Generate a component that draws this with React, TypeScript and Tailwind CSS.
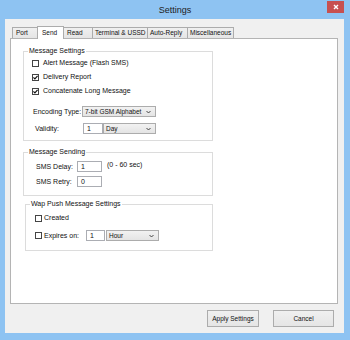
import React from "react";

function Check({ checked }: { checked?: boolean }) {
  return (
    <span className="w-[7px] h-[7px] border border-[#444] bg-white flex items-center justify-center shrink-0">
      {checked && (
        <svg width="5" height="5" viewBox="0 0 5 5">
          <path d="M0.4 2.4 L1.9 3.9 L4.6 0.8" stroke="#111" strokeWidth="1.2" fill="none" />
        </svg>
      )}
    </span>
  );
}

function Chevron() {
  return (
    <svg width="5" height="4" viewBox="0 0 5 4" className="shrink-0">
      <path d="M0.5 1 L2.5 3 L4.5 1" stroke="#333" strokeWidth="0.9" fill="none" />
    </svg>
  );
}

function Select({ cls, text }: { cls: string; text: string }) {
  return (
    <div className={"h-[11px] border border-[#acacac] bg-gradient-to-b from-[#f2f2f2] to-[#e4e4e4] flex items-center justify-between pl-[2px] pr-[4px] whitespace-nowrap overflow-hidden text-[6.5px] " + cls}>
      <span>{text}</span>
      <Chevron />
    </div>
  );
}

function Input({ cls, text }: { cls: string; text: string }) {
  return (
    <div className={"h-[11px] border border-[#abadb3] bg-white flex items-center pl-[3px] " + cls}>
      {text}
    </div>
  );
}

export default function App() {
  return (
    <div className="w-[350px] h-[340px] bg-[#8ec3f2] flex flex-col font-['Liberation_Sans',Arial,sans-serif] text-[7px] leading-[8px] text-[#111] whitespace-nowrap">
      <div className="h-[19px] relative flex items-center justify-center shrink-0">
        <span className="text-[9px] leading-[10px] text-[#222]">Settings</span>
        <div className="absolute right-[6px] top-[1px] w-[17px] h-[12px] bg-[#c75050] flex items-center justify-center">
          <svg width="6" height="6" viewBox="0 0 6 6">
            <path d="M1 1 L5 5 M5 1 L1 5" stroke="#fff" strokeWidth="1.4" />
          </svg>
        </div>
      </div>
      <div className="ml-[5px] mr-[6px] mb-[7px] flex-1 bg-[#f0f0f0] flex flex-col">
        <div className="ml-[7px] mt-[7px] h-[12px] flex items-end shrink-0 text-[6.5px]">
          <div className="w-[25px] h-[11px] border-l border-t border-[#acacac] bg-gradient-to-b from-[#f0f0f0] to-[#e5e5e5] pl-[3px] flex items-center">Port</div>
          <div className="w-[27px] h-[13px] -mb-[1px] relative z-10 border-l border-r border-t border-[#acacac] bg-white pl-[4px] flex items-start pt-[2px]">Send</div>
          <div className="w-[28px] h-[11px] border-t border-[#acacac] bg-gradient-to-b from-[#f0f0f0] to-[#e5e5e5] pl-[3px] flex items-center">Read</div>
          <div className="w-[55px] h-[11px] border-l border-t border-[#acacac] bg-gradient-to-b from-[#f0f0f0] to-[#e5e5e5] pl-[2px] flex items-center overflow-hidden">Terminal &amp; USSD</div>
          <div className="w-[40px] h-[11px] border-l border-t border-[#acacac] bg-gradient-to-b from-[#f0f0f0] to-[#e5e5e5] pl-[2px] flex items-center">Auto-Reply</div>
          <div className="w-[47px] h-[11px] border-l border-t border-r border-[#acacac] bg-gradient-to-b from-[#f0f0f0] to-[#e5e5e5] pl-[2px] flex items-center">Miscellaneous</div>
        </div>
        <div className="ml-[5px] w-[328px] h-[266px] border border-[#b4b4b4] bg-white flex flex-col shrink-0">
          <fieldset className="ml-[12px] mt-[8px] w-[190px] border border-[#dcdcdc] pt-[1px] pb-[6px]">
            <legend className="ml-[4px] px-[1px] leading-[8px]">Message Settings</legend>
            <div className="flex flex-col pl-[8px]">
              <div className="h-[14px] flex items-center gap-[4px]"><Check /><span>Alert Message (Flash SMS)</span></div>
              <div className="h-[14px] flex items-center gap-[4px]"><Check checked /><span>Delivery Report</span></div>
              <div className="h-[14px] flex items-center gap-[4px]"><Check checked /><span>Concatenate Long Message</span></div>
              <div className="mt-[8px] h-[11px] flex items-center">
                <span className="ml-[1px] w-[49px]">Encoding Type:</span>
                <Select cls="w-[74px]" text="7-bit GSM Alphabet" />
              </div>
              <div className="mt-[6px] h-[11px] flex items-center">
                <span className="ml-[3px] w-[48px]">Validity:</span>
                <Input cls="w-[20px]" text="1" />
                <Select cls="w-[53px]" text="Day" />
              </div>
            </div>
          </fieldset>
          <fieldset className="ml-[12px] mt-[7px] w-[190px] border border-[#dcdcdc] pb-[8px]">
            <legend className="ml-[4px] px-[1px] leading-[8px]">Message Sending</legend>
            <div className="flex flex-col pl-[12px]">
              <div className="mt-[5px] h-[11px] flex items-center">
                <span className="w-[41px]">SMS Delay:</span>
                <Input cls="w-[25px]" text="1" />
                <span className="ml-[5px] -mt-[3px]">(0 - 60 sec)</span>
              </div>
              <div className="mt-[4px] h-[11px] flex items-center">
                <span className="w-[41px]">SMS Retry:</span>
                <Input cls="w-[25px]" text="0" />
              </div>
            </div>
          </fieldset>
          <fieldset className="ml-[14px] mt-[4px] w-[188px] border border-[#dcdcdc] pb-[9px]">
            <legend className="ml-[4px] px-[1px] leading-[8px]">Wap Push Message Settings</legend>
            <div className="flex flex-col pl-[9px]">
              <div className="mt-[3px] h-[14px] flex items-center gap-[2px]"><Check /><span>Created</span></div>
              <div className="mt-[5px] h-[11px] flex items-center gap-[2px]">
                <Check />
                <span className="w-[42px]">Expires on:</span>
                <Input cls="w-[19px] -ml-[2px]" text="1" />
                <Select cls="w-[53px] -ml-[1px]" text="Hour" />
              </div>
            </div>
          </fieldset>
        </div>
        <div className="mt-[6px] pr-[10px] flex justify-end gap-[14px] shrink-0 text-[6.5px]">
          <div className="w-[52px] h-[17px] border border-[#acacac] bg-gradient-to-b from-[#f0f0f0] to-[#e5e5e5] flex items-center justify-center">Apply Settings</div>
          <div className="w-[61px] h-[17px] border border-[#acacac] bg-gradient-to-b from-[#f0f0f0] to-[#e5e5e5] flex items-center justify-center">Cancel</div>
        </div>
      </div>
    </div>
  );
}
